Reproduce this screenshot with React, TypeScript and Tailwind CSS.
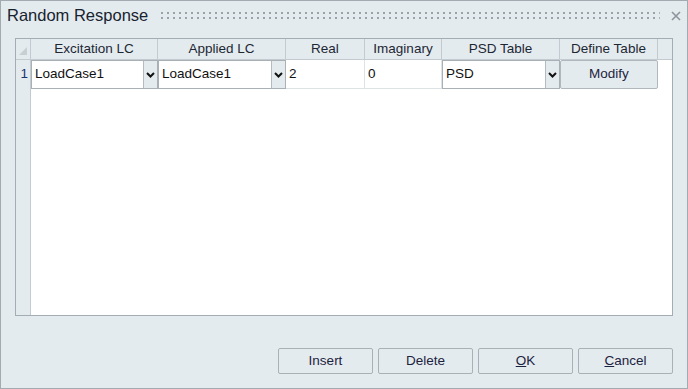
import React from 'react';

const Chevron: React.FC = () => (
    <svg width="9" height="6" viewBox="0 0 9 6">
        <path d="M1 1 L4.5 4.5 L8 1" fill="none" stroke="#111" strokeWidth="2" />
    </svg>
);

const SelectCell: React.FC<{ value: string; width: string }> = ({ value, width }) => (
    <div className={`${width} h-[29px] flex border border-[#a9b1b6] bg-white`}>
        <div className="flex-1 flex items-center pl-[3px] text-[13.5px] text-[#111]">{value}</div>
        <div className="w-[14px] flex items-center justify-center bg-[#e4ebef] border-l border-[#b3bbc0]">
            <Chevron />
        </div>
    </div>
);

const columns = [
    { label: 'Excitation LC', w: 'w-[127px]' },
    { label: 'Applied LC', w: 'w-[128px]' },
    { label: 'Real', w: 'w-[79px]' },
    { label: 'Imaginary', w: 'w-[77px]' },
    { label: 'PSD Table', w: 'w-[118px]' },
    { label: 'Define Table', w: 'w-[98px]' },
];

const buttons = [
    { label: 'Insert' },
    { label: 'Delete' },
    { label: 'OK', u: 'O', rest: 'K' },
    { label: 'Cancel', u: 'C', rest: 'ancel' },
];

export default function App() {
    return (
        <div className="w-[688px] h-[389px] flex flex-col bg-[#e4ebef] border border-[#a3abb0] font-['Liberation_Sans',Arial,sans-serif]">
            {/* Title bar */}
            <div className="h-[29px] flex items-center pl-[6px] pr-[6px]">
                <span className="text-[16.5px] text-[#18232f] leading-none">Random Response</span>
                <svg className="ml-[13px] flex-1" height="7">
                    <defs>
                        <pattern id="dots" width="6" height="5" patternUnits="userSpaceOnUse">
                            <rect x="0" y="0" width="2" height="2" fill="#9aa3a9" />
                        </pattern>
                    </defs>
                    <rect x="0" y="0" width="100%" height="7" fill="url(#dots)" />
                </svg>
                <svg className="ml-[11px]" width="10" height="10" viewBox="0 0 10 10">
                    <path d="M1 1 L9 9 M9 1 L1 9" stroke="#8c959b" strokeWidth="1.6" />
                </svg>
            </div>

            {/* Table */}
            <div className="mt-[8px] ml-[14px] w-[658px] h-[278px] border border-[#a4adb3] flex flex-col bg-white">
                {/* Header */}
                <div className="h-[21px] flex bg-[#e4ebef] border-b border-[#c3cbd0]">
                    <div className="w-[15px] border-r border-[#c3cbd0] relative">
                        <svg className="absolute right-[3px] bottom-[4px]" width="8" height="8" viewBox="0 0 8 8">
                            <path d="M8 0 L8 8 L0 8 Z" fill="#c8cfd3" />
                        </svg>
                    </div>
                    {columns.map((c) => (
                        <div
                            key={c.label}
                            className={`${c.w} border-r border-[#c3cbd0] flex items-center justify-center text-[13.5px] text-[#1c2733]`}
                        >
                            {c.label}
                        </div>
                    ))}
                    <div className="flex-1" />
                </div>

                {/* Body */}
                <div className="flex-1 flex">
                    <div className="w-[15px] bg-[#e4ebef] border-r border-[#c3cbd0]">
                        <div className="h-[29px] flex items-center justify-end pr-[2px] text-[13.5px] text-[#1a3570]">1</div>
                    </div>
                    <div className="flex-1">
                        <div className="h-[29px] flex">
                            <SelectCell value="LoadCase1" width="w-[127px]" />
                            <SelectCell value="LoadCase1" width="w-[128px]" />
                            <div className="w-[79px] h-[29px] flex items-center pl-[3px] border-r border-b border-[#dde2e5] text-[13.5px] text-[#111]">2</div>
                            <div className="w-[77px] h-[29px] flex items-center pl-[3px] border-r border-b border-[#dde2e5] text-[13.5px] text-[#111]">0</div>
                            <SelectCell value="PSD" width="w-[118px]" />
                            <div className="w-[98px] h-[29px] flex items-center justify-center bg-[#e4ebef] border border-[#b0b8bd] rounded-[2px] text-[13.5px] text-[#1c2340]">
                                Modify
                            </div>
                        </div>
                    </div>
                </div>
            </div>

            {/* Buttons */}
            <div className="mt-[32px] pr-[14px] flex justify-end gap-[5px]">
                {buttons.map((b) => (
                    <button
                        key={b.label}
                        className="w-[95px] h-[26px] flex items-center justify-center bg-[#e4ebef] border border-[#a9b1b6] rounded-[2px] text-[13.5px] text-[#1c2340]"
                    >
                        {b.u ? (
                            <span>
                                <span className="underline">{b.u}</span>
                                {b.rest}
                            </span>
                        ) : (
                            b.label
                        )}
                    </button>
                ))}
            </div>
        </div>
    );
}
